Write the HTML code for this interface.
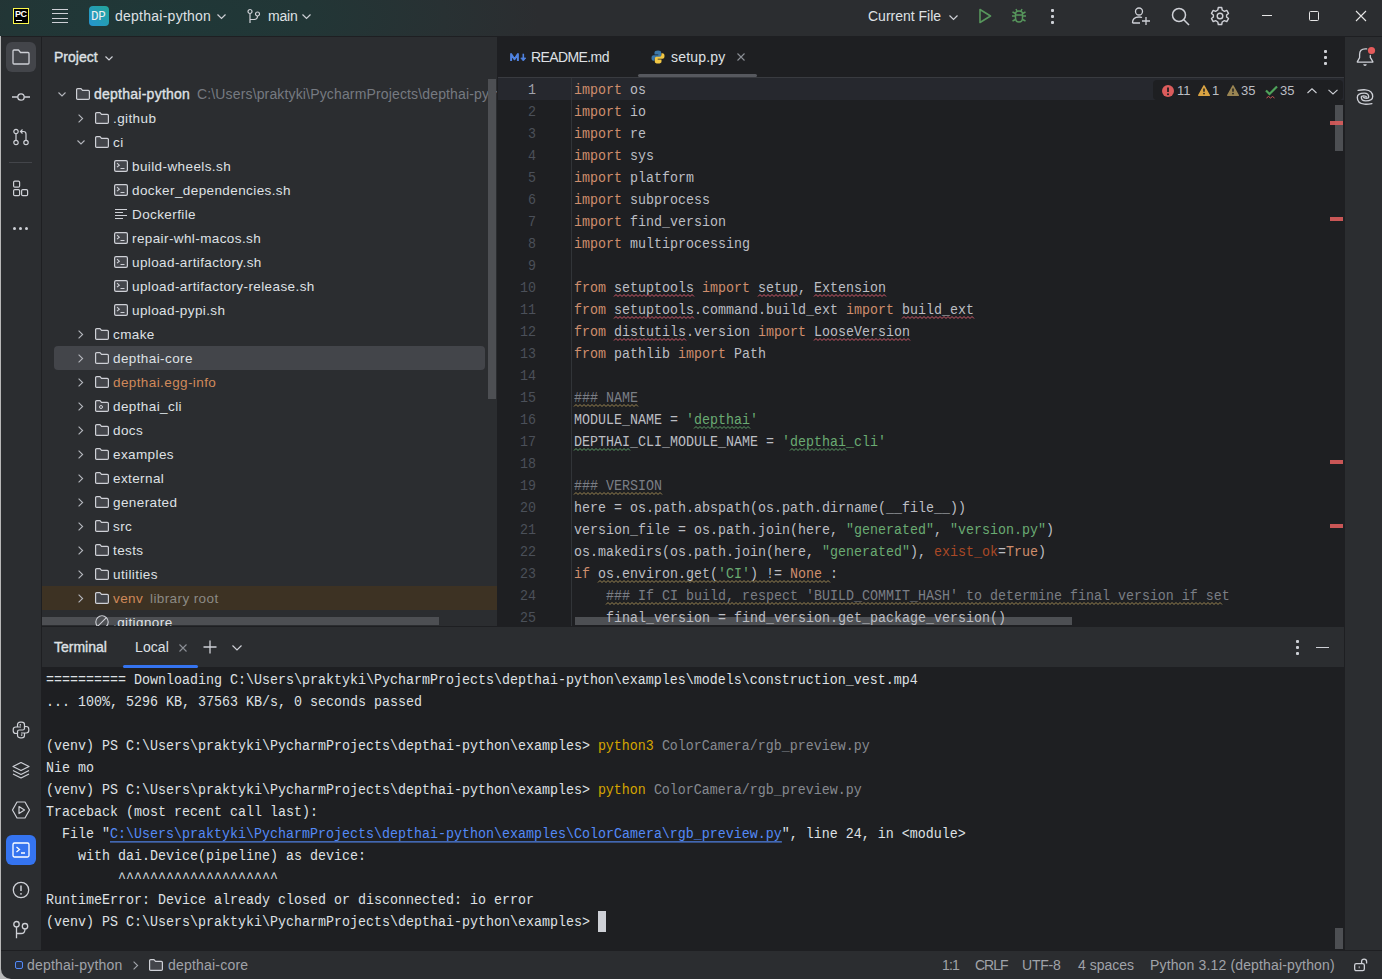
<!DOCTYPE html><html><head><meta charset="utf-8"><style>
*{box-sizing:border-box;margin:0;padding:0}
html,body{width:1382px;height:979px;overflow:hidden;background:#2B2D30}
body{position:relative;font-family:'Liberation Sans',sans-serif;font-size:14px;color:#DFE1E5}
.a{position:absolute}
.t{position:absolute;white-space:pre;line-height:16px}
.mono{font-family:'Liberation Mono',monospace;font-size:13.333px;white-space:pre;transform:scaleY(1.13);transform-origin:0 16.5px}
.sb{-webkit-text-stroke:0.35px currentColor}
svg{position:absolute;overflow:visible}
.kw{color:#CF8E6D}.str{color:#6AAB73}.cm{color:#7A7E85}.par{color:#AA4926}
.wr{text-decoration:underline wavy #F75464;text-decoration-thickness:1px;text-underline-offset:3px;text-decoration-skip-ink:none}
.wg{text-decoration:underline wavy #5E9B66;text-decoration-thickness:1px;text-underline-offset:3px;text-decoration-skip-ink:none}
.wy{text-decoration:underline wavy #8C7A4A;text-decoration-thickness:1px;text-underline-offset:3px;text-decoration-skip-ink:none}
</style></head><body><div class="a" style="left:0;top:0;width:1382px;height:36px;background:radial-gradient(ellipse 380px 110px at 160px 18px,#1F3838 0%,#223636 40%,#283133 75%,#2B2D30 100%)"></div><div class="a" style="left:0;top:36px;width:1382px;height:1px;background:#1E1F22"></div><div class="a" style="left:13px;top:8px;width:16px;height:16px;background:#000;border:1px solid #FCF84A"></div><div class="t" style="left:15px;top:8px;font-size:9px;font-weight:700;color:#fff;line-height:12px;letter-spacing:-0.5px">PC</div><div class="a" style="left:16px;top:20px;width:6px;height:1px;background:#fff"></div><div class="a" style="left:52px;top:8.5px;width:16px;height:1.4px;background:#CED0D6"></div><div class="a" style="left:52px;top:13.1px;width:16px;height:1.4px;background:#CED0D6"></div><div class="a" style="left:52px;top:17.5px;width:16px;height:1.4px;background:#CED0D6"></div><div class="a" style="left:52px;top:21.9px;width:16px;height:1.4px;background:#CED0D6"></div><div class="a" style="left:89px;top:6px;width:20px;height:20px;border-radius:4px;background:linear-gradient(45deg,#2594D2,#24A69A)"></div><div class="t" style="left:91px;top:9px;font-family:'Liberation Mono',monospace;font-size:12.5px;color:#F0F0F0;letter-spacing:-0.3px">DP</div><div class="t" style="left:115px;top:8px;color:#DFE1E5;letter-spacing:0.25px">depthai-python</div><svg style="left:217px;top:14px" width="9" height="4.5"><path d="M0.5 0.5 L4.5 4.5 L8.5 0.5" fill="none" stroke="#CED0D6" stroke-width="1.2"/></svg><svg style="left:247px;top:9px" width="14" height="15"><circle cx="3" cy="2.5" r="2" fill="none" stroke="#CED0D6" stroke-width="1.2"/><circle cx="10.5" cy="5" r="2" fill="none" stroke="#CED0D6" stroke-width="1.2"/><path d="M3 4.5 V14 M3 10.5 H7 Q10.5 10.5 10.5 7" fill="none" stroke="#CED0D6" stroke-width="1.2"/></svg><div class="t" style="left:268px;top:8px;color:#DFE1E5;letter-spacing:-0.2px">main</div><svg style="left:302px;top:14px" width="9" height="4.5"><path d="M0.5 0.5 L4.5 4.5 L8.5 0.5" fill="none" stroke="#CED0D6" stroke-width="1.2"/></svg><div class="t" style="left:868px;top:8px;color:#DFE1E5">Current File</div><svg style="left:949px;top:15px" width="9" height="4.5"><path d="M0.5 0.5 L4.5 4.5 L8.5 0.5" fill="none" stroke="#CED0D6" stroke-width="1.2"/></svg><svg style="left:977px;top:8px" width="16" height="16"><path d="M3 1.5 L13.5 8 L3 14.5 Z" fill="none" stroke="#57965C" stroke-width="1.6" stroke-linejoin="round"/></svg><svg style="left:1011px;top:8px" width="16" height="16"><path d="M4.5 6 Q4.5 3 8 3 Q11.5 3 11.5 6 V10 Q11.5 14 8 14 Q4.5 14 4.5 10 Z" fill="none" stroke="#57965C" stroke-width="1.5"/><path d="M6 3 L5 1 M10 3 L11 1 M1 8 H4.5 M11.5 8 H15 M1.5 13 L4.5 11.5 M14.5 13 L11.5 11.5 M1.5 4 L4.5 5.5 M14.5 4 L11.5 5.5 M4.5 7 H11.5" fill="none" stroke="#57965C" stroke-width="1.5"/></svg><div class="a" style="left:1051px;top:9px;width:2.5px;height:2.5px;background:#CED0D6;border-radius:1px"></div><div class="a" style="left:1051px;top:15px;width:2.5px;height:2.5px;background:#CED0D6;border-radius:1px"></div><div class="a" style="left:1051px;top:21px;width:2.5px;height:2.5px;background:#CED0D6;border-radius:1px"></div><svg style="left:1131px;top:6px" width="20" height="20"><circle cx="8" cy="5.5" r="3.5" fill="none" stroke="#CED0D6" stroke-width="1.3"/><path d="M1.5 17 Q1.5 11 8 11 Q10 11 11 11.5" fill="none" stroke="#CED0D6" stroke-width="1.3"/><path d="M1.5 17 H9 M15 11 V19 M11 15 H19" fill="none" stroke="#CED0D6" stroke-width="1.3"/></svg><svg style="left:1171px;top:7px" width="19" height="19"><circle cx="8" cy="8" r="6.5" fill="none" stroke="#CED0D6" stroke-width="1.5"/><path d="M12.8 12.8 L18 18" stroke="#CED0D6" stroke-width="1.6"/></svg><svg style="left:1210px;top:6px" width="20" height="20" viewBox="0 0 20 20"><path d="M8.3 1.5 H11.7 L12.2 4 L14.4 5.3 L16.8 4.4 L18.5 7.4 L16.6 9.1 V10.9 L18.5 12.6 L16.8 15.6 L14.4 14.7 L12.2 16 L11.7 18.5 H8.3 L7.8 16 L5.6 14.7 L3.2 15.6 L1.5 12.6 L3.4 10.9 V9.1 L1.5 7.4 L3.2 4.4 L5.6 5.3 L7.8 4 Z" fill="none" stroke="#CED0D6" stroke-width="1.4" stroke-linejoin="round"/><circle cx="10" cy="10" r="2.8" fill="none" stroke="#CED0D6" stroke-width="1.4"/></svg><div class="a" style="left:1262px;top:15px;width:10px;height:1px;background:#E6E6E6"></div><div class="a" style="left:1309px;top:11px;width:10px;height:10px;border:1px solid #E6E6E6;border-radius:1.5px"></div><svg style="left:1356px;top:11px" width="10" height="10"><path d="M0 0 L10 10 M10 0 L0 10" stroke="#E6E6E6" stroke-width="1.1"/></svg><div class="a" style="left:0;top:37px;width:41px;height:913px;background:#2B2D30"></div><div class="a" style="left:41px;top:37px;width:1px;height:913px;background:#1E1F22"></div><div class="a" style="left:0;top:36px;width:1px;height:915px;background:#B8B8B8"></div><div class="a" style="left:6px;top:42px;width:30px;height:30px;border-radius:6px;background:#43454A"></div><svg style="left:12px;top:49px" width="18" height="16"><path d="M1 2 Q1 1 2 1 H6.5 L8.5 3.5 H16 Q17 3.5 17 4.5 V14 Q17 15 16 15 H2 Q1 15 1 14 Z" fill="none" stroke="#CED0D6" stroke-width="1.3" stroke-linejoin="round"/></svg><svg style="left:11px;top:90px" width="20" height="14"><circle cx="10" cy="7" r="3.2" fill="none" stroke="#CED0D6" stroke-width="1.3"/><path d="M1 7 H6.8 M13.2 7 H19" stroke="#CED0D6" stroke-width="1.3"/></svg><svg style="left:12px;top:128px" width="18" height="18"><circle cx="4" cy="3.5" r="2.2" fill="none" stroke="#CED0D6" stroke-width="1.2"/><circle cx="4" cy="14.5" r="2.2" fill="none" stroke="#CED0D6" stroke-width="1.2"/><circle cx="14" cy="14.5" r="2.2" fill="none" stroke="#CED0D6" stroke-width="1.2"/><path d="M4 5.7 V12.3 M14 12.3 V6 Q14 3.5 11.5 3.5 H9 M10.5 1.5 L8.5 3.5 L10.5 5.5" fill="none" stroke="#CED0D6" stroke-width="1.2"/></svg><div class="a" style="left:9px;top:162px;width:23px;height:1px;background:#43454A"></div><svg style="left:12px;top:180px" width="18" height="18"><rect x="1.6" y="1.1" width="6" height="6" rx="1.2" fill="none" stroke="#CED0D6" stroke-width="1.2"/><rect x="1.6" y="9.6" width="6" height="6" rx="1.2" fill="none" stroke="#CED0D6" stroke-width="1.2"/><rect x="9.6" y="9.6" width="6" height="6" rx="1.2" fill="none" stroke="#CED0D6" stroke-width="1.2"/></svg><div class="a" style="left:13px;top:227px;width:3px;height:3px;border-radius:1.5px;background:#CED0D6"></div><div class="a" style="left:19px;top:227px;width:3px;height:3px;border-radius:1.5px;background:#CED0D6"></div><div class="a" style="left:25px;top:227px;width:3px;height:3px;border-radius:1.5px;background:#CED0D6"></div><svg style="left:12px;top:721px" width="18" height="18"><path d="M5.5 6 V3.8 Q5.5 1.2 8.2 1.2 H9.8 Q12.5 1.2 12.5 3.8 V7.2 Q12.5 9 10.7 9 H7.3 Q5.5 9 5.5 10.8 V12.5 H3.8 Q1.2 12.5 1.2 9.8 V8.7 Q1.2 6 3.8 6 H9" fill="none" stroke="#CED0D6" stroke-width="1.2" stroke-linejoin="round"/><path d="M12.5 12 V14.2 Q12.5 16.8 9.8 16.8 H8.2 Q5.5 16.8 5.5 14.2 V10.8 M12.5 7.2 V5.5 H14.2 Q16.8 5.5 16.8 8.2 V9.3 Q16.8 12 14.2 12 H9" fill="none" stroke="#CED0D6" stroke-width="1.2" stroke-linejoin="round"/><circle cx="8.3" cy="3.9" r="0.8" fill="#CED0D6"/><circle cx="9.7" cy="14.1" r="0.8" fill="#CED0D6"/></svg><svg style="left:11px;top:761px" width="20" height="18"><path d="M10 1.5 L18 5.5 L10 9.5 L2 5.5 Z" fill="none" stroke="#CED0D6" stroke-width="1.2" stroke-linejoin="round"/><path d="M2 9.5 L10 13.5 L18 9.5 M2 13 L10 17 L18 13" fill="none" stroke="#CED0D6" stroke-width="1.2" stroke-linejoin="round"/></svg><svg style="left:11px;top:800px" width="20" height="20"><path d="M6 2 H14 L18.5 10 L14 18 H6 L1.5 10 Z" fill="none" stroke="#CED0D6" stroke-width="1.2" stroke-linejoin="round"/><path d="M8 6.5 L13.5 10 L8 13.5 Z" fill="none" stroke="#CED0D6" stroke-width="1.2" stroke-linejoin="round"/></svg><div class="a" style="left:6px;top:835px;width:30px;height:30px;border-radius:6px;background:#3574F0"></div><svg style="left:12px;top:841px" width="18" height="18"><rect x="1" y="2" width="16" height="14" rx="1.5" fill="none" stroke="#fff" stroke-width="1.3"/><path d="M4.5 6 L7.5 8.5 L4.5 11 M9 12 H13" fill="none" stroke="#fff" stroke-width="1.3"/></svg><svg style="left:12px;top:881px" width="18" height="18"><circle cx="9" cy="9" r="7.7" fill="none" stroke="#CED0D6" stroke-width="1.3"/><path d="M9 4.5 V10" stroke="#CED0D6" stroke-width="1.5"/><circle cx="9" cy="12.8" r="0.9" fill="#CED0D6"/></svg><svg style="left:12px;top:920px" width="18" height="20"><circle cx="4.5" cy="4.2" r="2.7" fill="none" stroke="#CED0D6" stroke-width="1.3"/><circle cx="13" cy="6.2" r="2.7" fill="none" stroke="#CED0D6" stroke-width="1.3"/><path d="M4.5 6.9 V18.3 M4.5 13.5 H9 Q13 13.5 13 8.9" fill="none" stroke="#CED0D6" stroke-width="1.3"/></svg><div class="t sb" style="left:54px;top:49px;color:#DFE1E5">Project</div><svg style="left:105px;top:56px" width="8" height="4.0"><path d="M0.5 0.5 L4.0 4.0 L7.5 0.5" fill="none" stroke="#CED0D6" stroke-width="1.2"/></svg><svg style="left:58px;top:92px" width="8" height="4.0"><path d="M0.5 0.5 L4.0 4.0 L7.5 0.5" fill="none" stroke="#B4B6BC" stroke-width="1.1"/></svg><svg style="left:76px;top:88px" width="14" height="12"><path d="M0.6 1.7 Q0.6 0.6 1.7 0.6 H5 L6.5 2.4 H12.3 Q13.4 2.4 13.4 3.5 V10.3 Q13.4 11.4 12.3 11.4 H1.7 Q0.6 11.4 0.6 10.3 Z" fill="#43454A" stroke="#CED0D6" stroke-width="1.2" stroke-linejoin="round"/></svg><div class="t sb" style="left:94px;top:86px;color:#DFE1E5;letter-spacing:0.25px">depthai-python</div><div class="a" style="left:197px;top:86px;width:300px;height:18px;overflow:hidden"><div class="t" style="left:0;top:0;color:#767A81;letter-spacing:0.15px">C:\Users\praktyki\PycharmProjects\depthai-python</div></div><div class="a" style="left:488px;top:79px;width:8px;height:320px;background:#4D4F53"></div><div class="a" style="left:42px;top:617px;width:397px;height:8px;background:#4D4F53"></div><div class="a" style="left:54px;top:346px;width:431px;height:24px;border-radius:4px;background:#43454A"></div><div class="a" style="left:42px;top:586px;width:455px;height:24px;background:#3D3223"></div><svg style="left:78px;top:114px" width="6" height="9"><path d="M0.6 0.6 L4.6 4.5 L0.6 8.4" fill="none" stroke="#B4B6BC" stroke-width="1.1"/></svg><svg style="left:95px;top:112px" width="14" height="12"><path d="M0.6 1.7 Q0.6 0.6 1.7 0.6 H5 L6.5 2.4 H12.3 Q13.4 2.4 13.4 3.5 V10.3 Q13.4 11.4 12.3 11.4 H1.7 Q0.6 11.4 0.6 10.3 Z" fill="#43454A" stroke="#CED0D6" stroke-width="1.2" stroke-linejoin="round"/></svg><div class="t" style="left:113px;top:111px;color:#DFE1E5;font-size:13.5px;letter-spacing:0.4px">.github</div><svg style="left:77px;top:140px" width="8" height="4.0"><path d="M0.5 0.5 L4.0 4.0 L7.5 0.5" fill="none" stroke="#B4B6BC" stroke-width="1.1"/></svg><svg style="left:95px;top:136px" width="14" height="12"><path d="M0.6 1.7 Q0.6 0.6 1.7 0.6 H5 L6.5 2.4 H12.3 Q13.4 2.4 13.4 3.5 V10.3 Q13.4 11.4 12.3 11.4 H1.7 Q0.6 11.4 0.6 10.3 Z" fill="#43454A" stroke="#CED0D6" stroke-width="1.2" stroke-linejoin="round"/></svg><div class="t" style="left:113px;top:135px;color:#DFE1E5;font-size:13.5px;letter-spacing:0.4px">ci</div><svg style="left:114px;top:160px" width="14" height="12"><rect x="0.6" y="0.6" width="12.8" height="10.8" rx="1.4" fill="#43454A" stroke="#CED0D6" stroke-width="1.2"/><path d="M3 3.2 L5.3 5.2 L3 7.2 M6.5 8.5 H10.5" fill="none" stroke="#CED0D6" stroke-width="1.1"/></svg><div class="t" style="left:132px;top:159px;color:#DFE1E5;font-size:13.5px;letter-spacing:0.4px">build-wheels.sh</div><svg style="left:114px;top:184px" width="14" height="12"><rect x="0.6" y="0.6" width="12.8" height="10.8" rx="1.4" fill="#43454A" stroke="#CED0D6" stroke-width="1.2"/><path d="M3 3.2 L5.3 5.2 L3 7.2 M6.5 8.5 H10.5" fill="none" stroke="#CED0D6" stroke-width="1.1"/></svg><div class="t" style="left:132px;top:183px;color:#DFE1E5;font-size:13.5px;letter-spacing:0.4px">docker_dependencies.sh</div><svg style="left:114px;top:208px" width="14" height="12"><rect x="1" y="1" width="12" height="1" fill="#CED0D6"/><rect x="1" y="4" width="8" height="1" fill="#CED0D6"/><rect x="1" y="7" width="12" height="1" fill="#CED0D6"/><rect x="1" y="10" width="8" height="1" fill="#CED0D6"/></svg><div class="t" style="left:132px;top:207px;color:#DFE1E5;font-size:13.5px;letter-spacing:0.4px">Dockerfile</div><svg style="left:114px;top:232px" width="14" height="12"><rect x="0.6" y="0.6" width="12.8" height="10.8" rx="1.4" fill="#43454A" stroke="#CED0D6" stroke-width="1.2"/><path d="M3 3.2 L5.3 5.2 L3 7.2 M6.5 8.5 H10.5" fill="none" stroke="#CED0D6" stroke-width="1.1"/></svg><div class="t" style="left:132px;top:231px;color:#DFE1E5;font-size:13.5px;letter-spacing:0.4px">repair-whl-macos.sh</div><svg style="left:114px;top:256px" width="14" height="12"><rect x="0.6" y="0.6" width="12.8" height="10.8" rx="1.4" fill="#43454A" stroke="#CED0D6" stroke-width="1.2"/><path d="M3 3.2 L5.3 5.2 L3 7.2 M6.5 8.5 H10.5" fill="none" stroke="#CED0D6" stroke-width="1.1"/></svg><div class="t" style="left:132px;top:255px;color:#DFE1E5;font-size:13.5px;letter-spacing:0.4px">upload-artifactory.sh</div><svg style="left:114px;top:280px" width="14" height="12"><rect x="0.6" y="0.6" width="12.8" height="10.8" rx="1.4" fill="#43454A" stroke="#CED0D6" stroke-width="1.2"/><path d="M3 3.2 L5.3 5.2 L3 7.2 M6.5 8.5 H10.5" fill="none" stroke="#CED0D6" stroke-width="1.1"/></svg><div class="t" style="left:132px;top:279px;color:#DFE1E5;font-size:13.5px;letter-spacing:0.4px">upload-artifactory-release.sh</div><svg style="left:114px;top:304px" width="14" height="12"><rect x="0.6" y="0.6" width="12.8" height="10.8" rx="1.4" fill="#43454A" stroke="#CED0D6" stroke-width="1.2"/><path d="M3 3.2 L5.3 5.2 L3 7.2 M6.5 8.5 H10.5" fill="none" stroke="#CED0D6" stroke-width="1.1"/></svg><div class="t" style="left:132px;top:303px;color:#DFE1E5;font-size:13.5px;letter-spacing:0.4px">upload-pypi.sh</div><svg style="left:78px;top:330px" width="6" height="9"><path d="M0.6 0.6 L4.6 4.5 L0.6 8.4" fill="none" stroke="#B4B6BC" stroke-width="1.1"/></svg><svg style="left:95px;top:328px" width="14" height="12"><path d="M0.6 1.7 Q0.6 0.6 1.7 0.6 H5 L6.5 2.4 H12.3 Q13.4 2.4 13.4 3.5 V10.3 Q13.4 11.4 12.3 11.4 H1.7 Q0.6 11.4 0.6 10.3 Z" fill="#43454A" stroke="#CED0D6" stroke-width="1.2" stroke-linejoin="round"/></svg><div class="t" style="left:113px;top:327px;color:#DFE1E5;font-size:13.5px;letter-spacing:0.4px">cmake</div><svg style="left:78px;top:354px" width="6" height="9"><path d="M0.6 0.6 L4.6 4.5 L0.6 8.4" fill="none" stroke="#B4B6BC" stroke-width="1.1"/></svg><svg style="left:95px;top:352px" width="14" height="12"><path d="M0.6 1.7 Q0.6 0.6 1.7 0.6 H5 L6.5 2.4 H12.3 Q13.4 2.4 13.4 3.5 V10.3 Q13.4 11.4 12.3 11.4 H1.7 Q0.6 11.4 0.6 10.3 Z" fill="#43454A" stroke="#CED0D6" stroke-width="1.2" stroke-linejoin="round"/></svg><div class="t" style="left:113px;top:351px;color:#DFE1E5;font-size:13.5px;letter-spacing:0.4px">depthai-core</div><svg style="left:78px;top:378px" width="6" height="9"><path d="M0.6 0.6 L4.6 4.5 L0.6 8.4" fill="none" stroke="#B4B6BC" stroke-width="1.1"/></svg><svg style="left:95px;top:376px" width="14" height="12"><path d="M0.6 1.7 Q0.6 0.6 1.7 0.6 H5 L6.5 2.4 H12.3 Q13.4 2.4 13.4 3.5 V10.3 Q13.4 11.4 12.3 11.4 H1.7 Q0.6 11.4 0.6 10.3 Z" fill="#43454A" stroke="#CED0D6" stroke-width="1.2" stroke-linejoin="round"/></svg><div class="t" style="left:113px;top:375px;color:#D0895A;font-size:13.5px;letter-spacing:0.4px">depthai.egg-info</div><svg style="left:78px;top:402px" width="6" height="9"><path d="M0.6 0.6 L4.6 4.5 L0.6 8.4" fill="none" stroke="#B4B6BC" stroke-width="1.1"/></svg><svg style="left:95px;top:400px" width="14" height="12"><path d="M0.6 1.7 Q0.6 0.6 1.7 0.6 H5 L6.5 2.4 H12.3 Q13.4 2.4 13.4 3.5 V10.3 Q13.4 11.4 12.3 11.4 H1.7 Q0.6 11.4 0.6 10.3 Z" fill="#43454A" stroke="#CED0D6" stroke-width="1.2" stroke-linejoin="round"/></svg><div class="a" style="left:99px;top:405px;width:4px;height:4px;border:1px solid #CED0D6;border-radius:2px"></div><div class="t" style="left:113px;top:399px;color:#DFE1E5;font-size:13.5px;letter-spacing:0.4px">depthai_cli</div><svg style="left:78px;top:426px" width="6" height="9"><path d="M0.6 0.6 L4.6 4.5 L0.6 8.4" fill="none" stroke="#B4B6BC" stroke-width="1.1"/></svg><svg style="left:95px;top:424px" width="14" height="12"><path d="M0.6 1.7 Q0.6 0.6 1.7 0.6 H5 L6.5 2.4 H12.3 Q13.4 2.4 13.4 3.5 V10.3 Q13.4 11.4 12.3 11.4 H1.7 Q0.6 11.4 0.6 10.3 Z" fill="#43454A" stroke="#CED0D6" stroke-width="1.2" stroke-linejoin="round"/></svg><div class="t" style="left:113px;top:423px;color:#DFE1E5;font-size:13.5px;letter-spacing:0.4px">docs</div><svg style="left:78px;top:450px" width="6" height="9"><path d="M0.6 0.6 L4.6 4.5 L0.6 8.4" fill="none" stroke="#B4B6BC" stroke-width="1.1"/></svg><svg style="left:95px;top:448px" width="14" height="12"><path d="M0.6 1.7 Q0.6 0.6 1.7 0.6 H5 L6.5 2.4 H12.3 Q13.4 2.4 13.4 3.5 V10.3 Q13.4 11.4 12.3 11.4 H1.7 Q0.6 11.4 0.6 10.3 Z" fill="#43454A" stroke="#CED0D6" stroke-width="1.2" stroke-linejoin="round"/></svg><div class="t" style="left:113px;top:447px;color:#DFE1E5;font-size:13.5px;letter-spacing:0.4px">examples</div><svg style="left:78px;top:474px" width="6" height="9"><path d="M0.6 0.6 L4.6 4.5 L0.6 8.4" fill="none" stroke="#B4B6BC" stroke-width="1.1"/></svg><svg style="left:95px;top:472px" width="14" height="12"><path d="M0.6 1.7 Q0.6 0.6 1.7 0.6 H5 L6.5 2.4 H12.3 Q13.4 2.4 13.4 3.5 V10.3 Q13.4 11.4 12.3 11.4 H1.7 Q0.6 11.4 0.6 10.3 Z" fill="#43454A" stroke="#CED0D6" stroke-width="1.2" stroke-linejoin="round"/></svg><div class="t" style="left:113px;top:471px;color:#DFE1E5;font-size:13.5px;letter-spacing:0.4px">external</div><svg style="left:78px;top:498px" width="6" height="9"><path d="M0.6 0.6 L4.6 4.5 L0.6 8.4" fill="none" stroke="#B4B6BC" stroke-width="1.1"/></svg><svg style="left:95px;top:496px" width="14" height="12"><path d="M0.6 1.7 Q0.6 0.6 1.7 0.6 H5 L6.5 2.4 H12.3 Q13.4 2.4 13.4 3.5 V10.3 Q13.4 11.4 12.3 11.4 H1.7 Q0.6 11.4 0.6 10.3 Z" fill="#43454A" stroke="#CED0D6" stroke-width="1.2" stroke-linejoin="round"/></svg><div class="t" style="left:113px;top:495px;color:#DFE1E5;font-size:13.5px;letter-spacing:0.4px">generated</div><svg style="left:78px;top:522px" width="6" height="9"><path d="M0.6 0.6 L4.6 4.5 L0.6 8.4" fill="none" stroke="#B4B6BC" stroke-width="1.1"/></svg><svg style="left:95px;top:520px" width="14" height="12"><path d="M0.6 1.7 Q0.6 0.6 1.7 0.6 H5 L6.5 2.4 H12.3 Q13.4 2.4 13.4 3.5 V10.3 Q13.4 11.4 12.3 11.4 H1.7 Q0.6 11.4 0.6 10.3 Z" fill="#43454A" stroke="#CED0D6" stroke-width="1.2" stroke-linejoin="round"/></svg><div class="t" style="left:113px;top:519px;color:#DFE1E5;font-size:13.5px;letter-spacing:0.4px">src</div><svg style="left:78px;top:546px" width="6" height="9"><path d="M0.6 0.6 L4.6 4.5 L0.6 8.4" fill="none" stroke="#B4B6BC" stroke-width="1.1"/></svg><svg style="left:95px;top:544px" width="14" height="12"><path d="M0.6 1.7 Q0.6 0.6 1.7 0.6 H5 L6.5 2.4 H12.3 Q13.4 2.4 13.4 3.5 V10.3 Q13.4 11.4 12.3 11.4 H1.7 Q0.6 11.4 0.6 10.3 Z" fill="#43454A" stroke="#CED0D6" stroke-width="1.2" stroke-linejoin="round"/></svg><div class="t" style="left:113px;top:543px;color:#DFE1E5;font-size:13.5px;letter-spacing:0.4px">tests</div><svg style="left:78px;top:570px" width="6" height="9"><path d="M0.6 0.6 L4.6 4.5 L0.6 8.4" fill="none" stroke="#B4B6BC" stroke-width="1.1"/></svg><svg style="left:95px;top:568px" width="14" height="12"><path d="M0.6 1.7 Q0.6 0.6 1.7 0.6 H5 L6.5 2.4 H12.3 Q13.4 2.4 13.4 3.5 V10.3 Q13.4 11.4 12.3 11.4 H1.7 Q0.6 11.4 0.6 10.3 Z" fill="#43454A" stroke="#CED0D6" stroke-width="1.2" stroke-linejoin="round"/></svg><div class="t" style="left:113px;top:567px;color:#DFE1E5;font-size:13.5px;letter-spacing:0.4px">utilities</div><svg style="left:78px;top:594px" width="6" height="9"><path d="M0.6 0.6 L4.6 4.5 L0.6 8.4" fill="none" stroke="#B4B6BC" stroke-width="1.1"/></svg><svg style="left:95px;top:592px" width="14" height="12"><path d="M0.6 1.7 Q0.6 0.6 1.7 0.6 H5 L6.5 2.4 H12.3 Q13.4 2.4 13.4 3.5 V10.3 Q13.4 11.4 12.3 11.4 H1.7 Q0.6 11.4 0.6 10.3 Z" fill="#43454A" stroke="#CED0D6" stroke-width="1.2" stroke-linejoin="round"/></svg><div class="t" style="left:113px;top:591px;color:#D0895A;font-size:13.5px;letter-spacing:0.4px">venv</div><div class="t" style="left:150px;top:591px;color:#8C8A85;font-size:13.5px;letter-spacing:0.4px">library root</div><svg style="left:95px;top:615px" width="14" height="14"><circle cx="7" cy="7" r="6.2" fill="none" stroke="#CED0D6" stroke-width="1.1"/><path d="M2.6 11.4 L11.4 2.6" stroke="#CED0D6" stroke-width="1.1"/></svg><div class="t" style="left:113px;top:615px;color:#DFE1E5;font-size:13.5px;letter-spacing:0.4px">.gitignore</div><div class="a" style="left:497px;top:37px;width:847px;height:589px;background:#1E1F22"></div><div class="a" style="left:498px;top:77px;width:846px;height:1px;background:#393B40"></div><svg style="left:510px;top:53px" width="17" height="9"><path d="M1.1 8 V1 L4.5 6.2 L7.9 1 V8" fill="none" stroke="#4F82E0" stroke-width="2" stroke-linejoin="round"/><path d="M13.3 0.7 V6" stroke="#4F82E0" stroke-width="1.6"/><path d="M10.8 5 H15.8 L13.3 8 Z" fill="#4F82E0" stroke="#4F82E0" stroke-width="0.8" stroke-linejoin="round"/></svg><div class="t" style="left:531px;top:49px;color:#DFE1E5;letter-spacing:-0.6px">README.md</div><svg style="left:651px;top:50px" width="14" height="14" viewBox="0 0 14 14"><path d="M7 0.5 Q3.5 0.5 3.5 2.5 V4.5 H7.3 V5.2 H2.5 Q0.5 5.2 0.5 8 Q0.5 10.8 2.5 10.8 H3.6 V9 Q3.6 7.2 5.5 7.2 H8.6 Q10.2 7.2 10.2 5.6 V2.5 Q10.2 0.5 7 0.5 Z" fill="#3C78AA"/><path d="M7 13.5 Q10.5 13.5 10.5 11.5 V9.5 H6.7 V8.8 H11.5 Q13.5 8.8 13.5 6 Q13.5 3.2 11.5 3.2 H10.4 V5 Q10.4 6.8 8.5 6.8 H5.4 Q3.8 6.8 3.8 8.4 V11.5 Q3.8 13.5 7 13.5 Z" fill="#F2C744"/></svg><div class="t" style="left:671px;top:49px;color:#DFE1E5;letter-spacing:0.2px">setup.py</div><svg style="left:737px;top:53px" width="8" height="8"><path d="M0.5 0.5 L7.5 7.5 M7.5 0.5 L0.5 7.5" stroke="#8C8F96" stroke-width="1.1"/></svg><div class="a" style="left:638px;top:74px;width:119px;height:3px;border-radius:1.5px;background:#56585E"></div><div class="a" style="left:1324px;top:50px;width:2.5px;height:2.5px;background:#CED0D6;border-radius:1px"></div><div class="a" style="left:1324px;top:56px;width:2.5px;height:2.5px;background:#CED0D6;border-radius:1px"></div><div class="a" style="left:1324px;top:62px;width:2.5px;height:2.5px;background:#CED0D6;border-radius:1px"></div><div class="a" style="left:575px;top:617px;width:497px;height:8px;background:#4D4F53"></div><div class="a" style="left:498px;top:78px;width:846px;height:22px;background:#26282E"></div><div class="a" style="left:571px;top:78px;width:1px;height:548px;background:#313438"></div><div class="a mono" style="left:500px;top:78px;width:36px;text-align:right;line-height:22px;padding-top:2px;color:#A1A3AB">1</div><div class="a mono" style="left:574px;top:78px;line-height:22px;padding-top:2px;color:#BCBEC4"><span class="kw">import</span> os</div><div class="a mono" style="left:500px;top:100px;width:36px;text-align:right;line-height:22px;padding-top:2px;color:#4B5059">2</div><div class="a mono" style="left:574px;top:100px;line-height:22px;padding-top:2px;color:#BCBEC4"><span class="kw">import</span> io</div><div class="a mono" style="left:500px;top:122px;width:36px;text-align:right;line-height:22px;padding-top:2px;color:#4B5059">3</div><div class="a mono" style="left:574px;top:122px;line-height:22px;padding-top:2px;color:#BCBEC4"><span class="kw">import</span> re</div><div class="a mono" style="left:500px;top:144px;width:36px;text-align:right;line-height:22px;padding-top:2px;color:#4B5059">4</div><div class="a mono" style="left:574px;top:144px;line-height:22px;padding-top:2px;color:#BCBEC4"><span class="kw">import</span> sys</div><div class="a mono" style="left:500px;top:166px;width:36px;text-align:right;line-height:22px;padding-top:2px;color:#4B5059">5</div><div class="a mono" style="left:574px;top:166px;line-height:22px;padding-top:2px;color:#BCBEC4"><span class="kw">import</span> platform</div><div class="a mono" style="left:500px;top:188px;width:36px;text-align:right;line-height:22px;padding-top:2px;color:#4B5059">6</div><div class="a mono" style="left:574px;top:188px;line-height:22px;padding-top:2px;color:#BCBEC4"><span class="kw">import</span> subprocess</div><div class="a mono" style="left:500px;top:210px;width:36px;text-align:right;line-height:22px;padding-top:2px;color:#4B5059">7</div><div class="a mono" style="left:574px;top:210px;line-height:22px;padding-top:2px;color:#BCBEC4"><span class="kw">import</span> find_version</div><div class="a mono" style="left:500px;top:232px;width:36px;text-align:right;line-height:22px;padding-top:2px;color:#4B5059">8</div><div class="a mono" style="left:574px;top:232px;line-height:22px;padding-top:2px;color:#BCBEC4"><span class="kw">import</span> multiprocessing</div><div class="a mono" style="left:500px;top:254px;width:36px;text-align:right;line-height:22px;padding-top:2px;color:#4B5059">9</div><div class="a mono" style="left:574px;top:254px;line-height:22px;padding-top:2px;color:#BCBEC4"></div><div class="a mono" style="left:500px;top:276px;width:36px;text-align:right;line-height:22px;padding-top:2px;color:#4B5059">10</div><div class="a mono" style="left:574px;top:276px;line-height:22px;padding-top:2px;color:#BCBEC4"><span class="kw">from</span> setuptools <span class="kw">import</span> setup, Extension</div><div class="a mono" style="left:500px;top:298px;width:36px;text-align:right;line-height:22px;padding-top:2px;color:#4B5059">11</div><div class="a mono" style="left:574px;top:298px;line-height:22px;padding-top:2px;color:#BCBEC4"><span class="kw">from</span> setuptools.command.build_ext <span class="kw">import</span> build_ext</div><div class="a mono" style="left:500px;top:320px;width:36px;text-align:right;line-height:22px;padding-top:2px;color:#4B5059">12</div><div class="a mono" style="left:574px;top:320px;line-height:22px;padding-top:2px;color:#BCBEC4"><span class="kw">from</span> distutils.version <span class="kw">import</span> LooseVersion</div><div class="a mono" style="left:500px;top:342px;width:36px;text-align:right;line-height:22px;padding-top:2px;color:#4B5059">13</div><div class="a mono" style="left:574px;top:342px;line-height:22px;padding-top:2px;color:#BCBEC4"><span class="kw">from</span> pathlib <span class="kw">import</span> Path</div><div class="a mono" style="left:500px;top:364px;width:36px;text-align:right;line-height:22px;padding-top:2px;color:#4B5059">14</div><div class="a mono" style="left:574px;top:364px;line-height:22px;padding-top:2px;color:#BCBEC4"></div><div class="a mono" style="left:500px;top:386px;width:36px;text-align:right;line-height:22px;padding-top:2px;color:#4B5059">15</div><div class="a mono" style="left:574px;top:386px;line-height:22px;padding-top:2px;color:#BCBEC4"><span class="cm">### NAME</span></div><div class="a mono" style="left:500px;top:408px;width:36px;text-align:right;line-height:22px;padding-top:2px;color:#4B5059">16</div><div class="a mono" style="left:574px;top:408px;line-height:22px;padding-top:2px;color:#BCBEC4">MODULE_NAME = <span class="str">'</span><span class="str">depthai</span><span class="str">'</span></div><div class="a mono" style="left:500px;top:430px;width:36px;text-align:right;line-height:22px;padding-top:2px;color:#4B5059">17</div><div class="a mono" style="left:574px;top:430px;line-height:22px;padding-top:2px;color:#BCBEC4">DEPTHAI_CLI_MODULE_NAME = <span class="str">'</span><span class="str">depthai</span><span class="str">_cli'</span></div><div class="a mono" style="left:500px;top:452px;width:36px;text-align:right;line-height:22px;padding-top:2px;color:#4B5059">18</div><div class="a mono" style="left:574px;top:452px;line-height:22px;padding-top:2px;color:#BCBEC4"></div><div class="a mono" style="left:500px;top:474px;width:36px;text-align:right;line-height:22px;padding-top:2px;color:#4B5059">19</div><div class="a mono" style="left:574px;top:474px;line-height:22px;padding-top:2px;color:#BCBEC4"><span class="cm">### VERSION</span></div><div class="a mono" style="left:500px;top:496px;width:36px;text-align:right;line-height:22px;padding-top:2px;color:#4B5059">20</div><div class="a mono" style="left:574px;top:496px;line-height:22px;padding-top:2px;color:#BCBEC4">here = os.path.abspath(os.path.dirname(__file__))</div><div class="a mono" style="left:500px;top:518px;width:36px;text-align:right;line-height:22px;padding-top:2px;color:#4B5059">21</div><div class="a mono" style="left:574px;top:518px;line-height:22px;padding-top:2px;color:#BCBEC4">version_file = os.path.join(here, <span class="str">"generated"</span>, <span class="str">"version.py"</span>)</div><div class="a mono" style="left:500px;top:540px;width:36px;text-align:right;line-height:22px;padding-top:2px;color:#4B5059">22</div><div class="a mono" style="left:574px;top:540px;line-height:22px;padding-top:2px;color:#BCBEC4">os.makedirs(os.path.join(here, <span class="str">"generated"</span>), <span class="par">exist_ok</span>=<span class="kw">True</span>)</div><div class="a mono" style="left:500px;top:562px;width:36px;text-align:right;line-height:22px;padding-top:2px;color:#4B5059">23</div><div class="a mono" style="left:574px;top:562px;line-height:22px;padding-top:2px;color:#BCBEC4"><span class="kw">if</span> os.environ.get(<span class="str">'CI'</span>) != <span class="kw">None</span> :</div><div class="a mono" style="left:500px;top:584px;width:36px;text-align:right;line-height:22px;padding-top:2px;color:#4B5059">24</div><div class="a mono" style="left:574px;top:584px;line-height:22px;padding-top:2px;color:#BCBEC4">    <span class="cm">### If CI build, respect 'BUILD_COMMIT_HASH' to determine final version if set</span></div><div class="a mono" style="left:500px;top:606px;width:36px;text-align:right;line-height:22px;padding-top:2px;color:#4B5059">25</div><div class="a mono" style="left:574px;top:606px;line-height:22px;padding-top:2px;color:#BCBEC4">    final_version = find_version.get_package_version()</div><svg style="left:614px;top:294px" width="80" height="3"><polyline points="0 2.5 2 0.5 4 2.5 6 0.5 8 2.5 10 0.5 12 2.5 14 0.5 16 2.5 18 0.5 20 2.5 22 0.5 24 2.5 26 0.5 28 2.5 30 0.5 32 2.5 34 0.5 36 2.5 38 0.5 40 2.5 42 0.5 44 2.5 46 0.5 48 2.5 50 0.5 52 2.5 54 0.5 56 2.5 58 0.5 60 2.5 62 0.5 64 2.5 66 0.5 68 2.5 70 0.5 72 2.5 74 0.5 76 2.5 78 0.5 80 2.5" fill="none" stroke="#D25A6B" stroke-width="1"/></svg><svg style="left:758px;top:294px" width="40" height="3"><polyline points="0 2.5 2 0.5 4 2.5 6 0.5 8 2.5 10 0.5 12 2.5 14 0.5 16 2.5 18 0.5 20 2.5 22 0.5 24 2.5 26 0.5 28 2.5 30 0.5 32 2.5 34 0.5 36 2.5 38 0.5 40 2.5" fill="none" stroke="#D25A6B" stroke-width="1"/></svg><svg style="left:814px;top:294px" width="72" height="3"><polyline points="0 2.5 2 0.5 4 2.5 6 0.5 8 2.5 10 0.5 12 2.5 14 0.5 16 2.5 18 0.5 20 2.5 22 0.5 24 2.5 26 0.5 28 2.5 30 0.5 32 2.5 34 0.5 36 2.5 38 0.5 40 2.5 42 0.5 44 2.5 46 0.5 48 2.5 50 0.5 52 2.5 54 0.5 56 2.5 58 0.5 60 2.5 62 0.5 64 2.5 66 0.5 68 2.5 70 0.5 72 2.5" fill="none" stroke="#D25A6B" stroke-width="1"/></svg><svg style="left:614px;top:316px" width="80" height="3"><polyline points="0 2.5 2 0.5 4 2.5 6 0.5 8 2.5 10 0.5 12 2.5 14 0.5 16 2.5 18 0.5 20 2.5 22 0.5 24 2.5 26 0.5 28 2.5 30 0.5 32 2.5 34 0.5 36 2.5 38 0.5 40 2.5 42 0.5 44 2.5 46 0.5 48 2.5 50 0.5 52 2.5 54 0.5 56 2.5 58 0.5 60 2.5 62 0.5 64 2.5 66 0.5 68 2.5 70 0.5 72 2.5 74 0.5 76 2.5 78 0.5 80 2.5" fill="none" stroke="#D25A6B" stroke-width="1"/></svg><svg style="left:902px;top:316px" width="72" height="3"><polyline points="0 2.5 2 0.5 4 2.5 6 0.5 8 2.5 10 0.5 12 2.5 14 0.5 16 2.5 18 0.5 20 2.5 22 0.5 24 2.5 26 0.5 28 2.5 30 0.5 32 2.5 34 0.5 36 2.5 38 0.5 40 2.5 42 0.5 44 2.5 46 0.5 48 2.5 50 0.5 52 2.5 54 0.5 56 2.5 58 0.5 60 2.5 62 0.5 64 2.5 66 0.5 68 2.5 70 0.5 72 2.5" fill="none" stroke="#D25A6B" stroke-width="1"/></svg><svg style="left:614px;top:338px" width="72" height="3"><polyline points="0 2.5 2 0.5 4 2.5 6 0.5 8 2.5 10 0.5 12 2.5 14 0.5 16 2.5 18 0.5 20 2.5 22 0.5 24 2.5 26 0.5 28 2.5 30 0.5 32 2.5 34 0.5 36 2.5 38 0.5 40 2.5 42 0.5 44 2.5 46 0.5 48 2.5 50 0.5 52 2.5 54 0.5 56 2.5 58 0.5 60 2.5 62 0.5 64 2.5 66 0.5 68 2.5 70 0.5 72 2.5" fill="none" stroke="#D25A6B" stroke-width="1"/></svg><svg style="left:814px;top:338px" width="96" height="3"><polyline points="0 2.5 2 0.5 4 2.5 6 0.5 8 2.5 10 0.5 12 2.5 14 0.5 16 2.5 18 0.5 20 2.5 22 0.5 24 2.5 26 0.5 28 2.5 30 0.5 32 2.5 34 0.5 36 2.5 38 0.5 40 2.5 42 0.5 44 2.5 46 0.5 48 2.5 50 0.5 52 2.5 54 0.5 56 2.5 58 0.5 60 2.5 62 0.5 64 2.5 66 0.5 68 2.5 70 0.5 72 2.5 74 0.5 76 2.5 78 0.5 80 2.5 82 0.5 84 2.5 86 0.5 88 2.5 90 0.5 92 2.5 94 0.5 96 2.5" fill="none" stroke="#D25A6B" stroke-width="1"/></svg><svg style="left:574px;top:404px" width="64" height="3"><polyline points="0 2.5 2 0.5 4 2.5 6 0.5 8 2.5 10 0.5 12 2.5 14 0.5 16 2.5 18 0.5 20 2.5 22 0.5 24 2.5 26 0.5 28 2.5 30 0.5 32 2.5 34 0.5 36 2.5 38 0.5 40 2.5 42 0.5 44 2.5 46 0.5 48 2.5 50 0.5 52 2.5 54 0.5 56 2.5 58 0.5 60 2.5 62 0.5 64 2.5" fill="none" stroke="#9C8652" stroke-width="1"/></svg><svg style="left:694px;top:426px" width="56" height="3"><polyline points="0 2.5 2 0.5 4 2.5 6 0.5 8 2.5 10 0.5 12 2.5 14 0.5 16 2.5 18 0.5 20 2.5 22 0.5 24 2.5 26 0.5 28 2.5 30 0.5 32 2.5 34 0.5 36 2.5 38 0.5 40 2.5 42 0.5 44 2.5 46 0.5 48 2.5 50 0.5 52 2.5 54 0.5 56 2.5" fill="none" stroke="#5E9F67" stroke-width="1"/></svg><svg style="left:574px;top:448px" width="56" height="3"><polyline points="0 2.5 2 0.5 4 2.5 6 0.5 8 2.5 10 0.5 12 2.5 14 0.5 16 2.5 18 0.5 20 2.5 22 0.5 24 2.5 26 0.5 28 2.5 30 0.5 32 2.5 34 0.5 36 2.5 38 0.5 40 2.5 42 0.5 44 2.5 46 0.5 48 2.5 50 0.5 52 2.5 54 0.5 56 2.5" fill="none" stroke="#5E9F67" stroke-width="1"/></svg><svg style="left:790px;top:448px" width="56" height="3"><polyline points="0 2.5 2 0.5 4 2.5 6 0.5 8 2.5 10 0.5 12 2.5 14 0.5 16 2.5 18 0.5 20 2.5 22 0.5 24 2.5 26 0.5 28 2.5 30 0.5 32 2.5 34 0.5 36 2.5 38 0.5 40 2.5 42 0.5 44 2.5 46 0.5 48 2.5 50 0.5 52 2.5 54 0.5 56 2.5" fill="none" stroke="#5E9F67" stroke-width="1"/></svg><svg style="left:574px;top:492px" width="88" height="3"><polyline points="0 2.5 2 0.5 4 2.5 6 0.5 8 2.5 10 0.5 12 2.5 14 0.5 16 2.5 18 0.5 20 2.5 22 0.5 24 2.5 26 0.5 28 2.5 30 0.5 32 2.5 34 0.5 36 2.5 38 0.5 40 2.5 42 0.5 44 2.5 46 0.5 48 2.5 50 0.5 52 2.5 54 0.5 56 2.5 58 0.5 60 2.5 62 0.5 64 2.5 66 0.5 68 2.5 70 0.5 72 2.5 74 0.5 76 2.5 78 0.5 80 2.5 82 0.5 84 2.5 86 0.5 88 2.5" fill="none" stroke="#9C8652" stroke-width="1"/></svg><svg style="left:598px;top:580px" width="232" height="3"><polyline points="0 2.5 2 0.5 4 2.5 6 0.5 8 2.5 10 0.5 12 2.5 14 0.5 16 2.5 18 0.5 20 2.5 22 0.5 24 2.5 26 0.5 28 2.5 30 0.5 32 2.5 34 0.5 36 2.5 38 0.5 40 2.5 42 0.5 44 2.5 46 0.5 48 2.5 50 0.5 52 2.5 54 0.5 56 2.5 58 0.5 60 2.5 62 0.5 64 2.5 66 0.5 68 2.5 70 0.5 72 2.5 74 0.5 76 2.5 78 0.5 80 2.5 82 0.5 84 2.5 86 0.5 88 2.5 90 0.5 92 2.5 94 0.5 96 2.5 98 0.5 100 2.5 102 0.5 104 2.5 106 0.5 108 2.5 110 0.5 112 2.5 114 0.5 116 2.5 118 0.5 120 2.5 122 0.5 124 2.5 126 0.5 128 2.5 130 0.5 132 2.5 134 0.5 136 2.5 138 0.5 140 2.5 142 0.5 144 2.5 146 0.5 148 2.5 150 0.5 152 2.5 154 0.5 156 2.5 158 0.5 160 2.5 162 0.5 164 2.5 166 0.5 168 2.5 170 0.5 172 2.5 174 0.5 176 2.5 178 0.5 180 2.5 182 0.5 184 2.5 186 0.5 188 2.5 190 0.5 192 2.5 194 0.5 196 2.5 198 0.5 200 2.5 202 0.5 204 2.5 206 0.5 208 2.5 210 0.5 212 2.5 214 0.5 216 2.5 218 0.5 220 2.5 222 0.5 224 2.5 226 0.5 228 2.5 230 0.5 232 2.5" fill="none" stroke="#9C8652" stroke-width="1"/></svg><svg style="left:606px;top:602px" width="616" height="3"><polyline points="0 2.5 2 0.5 4 2.5 6 0.5 8 2.5 10 0.5 12 2.5 14 0.5 16 2.5 18 0.5 20 2.5 22 0.5 24 2.5 26 0.5 28 2.5 30 0.5 32 2.5 34 0.5 36 2.5 38 0.5 40 2.5 42 0.5 44 2.5 46 0.5 48 2.5 50 0.5 52 2.5 54 0.5 56 2.5 58 0.5 60 2.5 62 0.5 64 2.5 66 0.5 68 2.5 70 0.5 72 2.5 74 0.5 76 2.5 78 0.5 80 2.5 82 0.5 84 2.5 86 0.5 88 2.5 90 0.5 92 2.5 94 0.5 96 2.5 98 0.5 100 2.5 102 0.5 104 2.5 106 0.5 108 2.5 110 0.5 112 2.5 114 0.5 116 2.5 118 0.5 120 2.5 122 0.5 124 2.5 126 0.5 128 2.5 130 0.5 132 2.5 134 0.5 136 2.5 138 0.5 140 2.5 142 0.5 144 2.5 146 0.5 148 2.5 150 0.5 152 2.5 154 0.5 156 2.5 158 0.5 160 2.5 162 0.5 164 2.5 166 0.5 168 2.5 170 0.5 172 2.5 174 0.5 176 2.5 178 0.5 180 2.5 182 0.5 184 2.5 186 0.5 188 2.5 190 0.5 192 2.5 194 0.5 196 2.5 198 0.5 200 2.5 202 0.5 204 2.5 206 0.5 208 2.5 210 0.5 212 2.5 214 0.5 216 2.5 218 0.5 220 2.5 222 0.5 224 2.5 226 0.5 228 2.5 230 0.5 232 2.5 234 0.5 236 2.5 238 0.5 240 2.5 242 0.5 244 2.5 246 0.5 248 2.5 250 0.5 252 2.5 254 0.5 256 2.5 258 0.5 260 2.5 262 0.5 264 2.5 266 0.5 268 2.5 270 0.5 272 2.5 274 0.5 276 2.5 278 0.5 280 2.5 282 0.5 284 2.5 286 0.5 288 2.5 290 0.5 292 2.5 294 0.5 296 2.5 298 0.5 300 2.5 302 0.5 304 2.5 306 0.5 308 2.5 310 0.5 312 2.5 314 0.5 316 2.5 318 0.5 320 2.5 322 0.5 324 2.5 326 0.5 328 2.5 330 0.5 332 2.5 334 0.5 336 2.5 338 0.5 340 2.5 342 0.5 344 2.5 346 0.5 348 2.5 350 0.5 352 2.5 354 0.5 356 2.5 358 0.5 360 2.5 362 0.5 364 2.5 366 0.5 368 2.5 370 0.5 372 2.5 374 0.5 376 2.5 378 0.5 380 2.5 382 0.5 384 2.5 386 0.5 388 2.5 390 0.5 392 2.5 394 0.5 396 2.5 398 0.5 400 2.5 402 0.5 404 2.5 406 0.5 408 2.5 410 0.5 412 2.5 414 0.5 416 2.5 418 0.5 420 2.5 422 0.5 424 2.5 426 0.5 428 2.5 430 0.5 432 2.5 434 0.5 436 2.5 438 0.5 440 2.5 442 0.5 444 2.5 446 0.5 448 2.5 450 0.5 452 2.5 454 0.5 456 2.5 458 0.5 460 2.5 462 0.5 464 2.5 466 0.5 468 2.5 470 0.5 472 2.5 474 0.5 476 2.5 478 0.5 480 2.5 482 0.5 484 2.5 486 0.5 488 2.5 490 0.5 492 2.5 494 0.5 496 2.5 498 0.5 500 2.5 502 0.5 504 2.5 506 0.5 508 2.5 510 0.5 512 2.5 514 0.5 516 2.5 518 0.5 520 2.5 522 0.5 524 2.5 526 0.5 528 2.5 530 0.5 532 2.5 534 0.5 536 2.5 538 0.5 540 2.5 542 0.5 544 2.5 546 0.5 548 2.5 550 0.5 552 2.5 554 0.5 556 2.5 558 0.5 560 2.5 562 0.5 564 2.5 566 0.5 568 2.5 570 0.5 572 2.5 574 0.5 576 2.5 578 0.5 580 2.5 582 0.5 584 2.5 586 0.5 588 2.5 590 0.5 592 2.5 594 0.5 596 2.5 598 0.5 600 2.5 602 0.5 604 2.5 606 0.5 608 2.5 610 0.5 612 2.5 614 0.5 616 2.5" fill="none" stroke="#9C8652" stroke-width="1"/></svg><div class="a" style="left:1153px;top:80px;width:190px;height:20px;border-radius:4px;background:#1E1F22"></div><svg style="left:1162px;top:85px" width="12" height="12"><circle cx="6" cy="6" r="6" fill="#DB5C5C"/><path d="M6 2.5 V7" stroke="#1E1F22" stroke-width="1.8"/><circle cx="6" cy="9.2" r="1" fill="#1E1F22"/></svg><div class="t" style="left:1177px;top:83px;color:#BCBEC4;font-size:13px">11</div><svg style="left:1198px;top:85px" width="12" height="11"><path d="M6 0.8 L11.3 10.3 H0.7 Z" fill="#D9A343" stroke="#D9A343" stroke-width="1.4" stroke-linejoin="round"/><path d="M6 3.5 V6.8" stroke="#1E1F22" stroke-width="1.5"/><circle cx="6" cy="8.6" r="0.85" fill="#1E1F22"/></svg><div class="t" style="left:1212px;top:83px;color:#BCBEC4;font-size:13px">1</div><svg style="left:1227px;top:85px" width="12" height="11"><path d="M6 0.8 L11.3 10.3 H0.7 Z" fill="#9A8553" stroke="#9A8553" stroke-width="1.4" stroke-linejoin="round"/><path d="M6 3.5 V6.8" stroke="#1E1F22" stroke-width="1.5"/><circle cx="6" cy="8.6" r="0.85" fill="#1E1F22"/></svg><div class="t" style="left:1241px;top:83px;color:#BCBEC4;font-size:13px">35</div><svg style="left:1265px;top:85px" width="14" height="14"><path d="M1 5.5 L4.5 9 L12 1.5" fill="none" stroke="#4FA35A" stroke-width="2.2"/><path d="M1.5 13 L3.5 11.5 L5.5 13 L7.5 11.5 L9.5 13" fill="none" stroke="#DB5C5C" stroke-width="0.9"/></svg><div class="t" style="left:1280px;top:83px;color:#BCBEC4;font-size:13px">35</div><svg style="left:1307px;top:88px" width="10" height="6"><path d="M0.5 5 L5 0.8 L9.5 5" fill="none" stroke="#CED0D6" stroke-width="1.1"/></svg><svg style="left:1328px;top:89px" width="10" height="6"><path d="M0.5 0.8 L5 5 L9.5 0.8" fill="none" stroke="#CED0D6" stroke-width="1.1"/></svg><div class="a" style="left:1335px;top:105px;width:8px;height:46px;background:#4D4F53"></div><div class="a" style="left:1330px;top:121px;width:13px;height:4px;background:#DB5C5C;opacity:0.9"></div><div class="a" style="left:1330px;top:217px;width:13px;height:4px;background:#DB5C5C;opacity:0.9"></div><div class="a" style="left:1330px;top:460px;width:13px;height:4px;background:#DB5C5C;opacity:0.9"></div><div class="a" style="left:1330px;top:524px;width:13px;height:4px;background:#DB5C5C;opacity:0.9"></div><div class="a" style="left:1344px;top:37px;width:1px;height:913px;background:#1E1F22"></div><div class="a" style="left:1345px;top:37px;width:37px;height:913px;background:#2B2D30"></div><svg style="left:1356px;top:46px" width="22" height="22"><path d="M10.7 2.9 H9.3 Q3.6 2.9 3.6 8.6 V11.6 L1.4 15.6 Q1.1 16.2 1.8 16.2 H16.4 Q17.1 16.2 16.8 15.6 L14.3 11.4 V9.4" fill="none" stroke="#CED0D6" stroke-width="1.3" stroke-linejoin="round" stroke-linecap="round"/><path d="M7.2 18.2 H10.8 Q10.6 20 9 20 Q7.4 20 7.2 18.2 Z" fill="#CED0D6"/><circle cx="15.5" cy="4.5" r="3.6" fill="#E55B5B"/></svg><svg style="left:1356px;top:88px" width="18" height="18" viewBox="0 0 18 18"><path d="M2.1 2.4 Q6 1.6 9.5 1.8 Q16.7 2.5 16.7 8.5 Q16.7 12.9 9.7 12.9 Q5.3 12.9 5.3 9 Q5.3 7.8 7.5 7.8 Q10.2 7.8 10.7 9" fill="none" stroke="#CED0D6" stroke-width="1.35" stroke-linecap="round"/><path d="M15.9 15.6 Q12 16.4 8.5 16.2 Q1.3 15.5 1.3 9.5 Q1.3 5.1 8.3 5.1 Q12.7 5.1 12.7 9 Q12.7 10.2 10.5 10.2 Q7.8 10.2 7.3 9" fill="none" stroke="#CED0D6" stroke-width="1.35" stroke-linecap="round"/></svg><div class="a" style="left:42px;top:626px;width:1302px;height:1px;background:#1E1F22"></div><div class="a" style="left:42px;top:627px;width:1302px;height:40px;background:#2B2D30"></div><div class="a" style="left:42px;top:667px;width:1302px;height:283px;background:#1E1F22"></div><div class="t sb" style="left:54px;top:639px;color:#DFE1E5">Terminal</div><div class="t" style="left:135px;top:639px;color:#DFE1E5;letter-spacing:0.1px">Local</div><svg style="left:179px;top:644px" width="8" height="8"><path d="M0.5 0.5 L7.5 7.5 M7.5 0.5 L0.5 7.5" stroke="#8C8F96" stroke-width="1.1"/></svg><svg style="left:203px;top:640px" width="14" height="14"><path d="M7 0.5 V13.5 M0.5 7 H13.5" stroke="#CED0D6" stroke-width="1.3"/></svg><svg style="left:232px;top:645px" width="10" height="5.0"><path d="M0.5 0.5 L5.0 5.0 L9.5 0.5" fill="none" stroke="#CED0D6" stroke-width="1.2"/></svg><div class="a" style="left:123px;top:665px;width:75px;height:3px;border-radius:1.5px;background:#3574F0"></div><div class="a" style="left:1296px;top:640px;width:2.5px;height:2.5px;background:#CED0D6;border-radius:1px"></div><div class="a" style="left:1296px;top:646px;width:2.5px;height:2.5px;background:#CED0D6;border-radius:1px"></div><div class="a" style="left:1296px;top:652px;width:2.5px;height:2.5px;background:#CED0D6;border-radius:1px"></div><div class="a" style="left:1316px;top:647px;width:13px;height:1.3px;background:#CED0D6"></div><div class="a mono" style="left:46px;top:668px;line-height:22px;padding-top:2px;color:#DFE1E5">========== Downloading C:\Users\praktyki\PycharmProjects\depthai-python\examples\models\construction_vest.mp4</div><div class="a mono" style="left:46px;top:690px;line-height:22px;padding-top:2px;color:#DFE1E5">... 100%, 5296 KB, 37563 KB/s, 0 seconds passed</div><div class="a mono" style="left:46px;top:712px;line-height:22px;padding-top:2px;color:#DFE1E5"></div><div class="a mono" style="left:46px;top:734px;line-height:22px;padding-top:2px;color:#DFE1E5">(venv) PS C:\Users\praktyki\PycharmProjects\depthai-python\examples&gt; <span style="color:#D5A500">python3</span> <span style="color:#868A91">ColorCamera/rgb_preview.py</span></div><div class="a mono" style="left:46px;top:756px;line-height:22px;padding-top:2px;color:#DFE1E5">Nie mo</div><div class="a mono" style="left:46px;top:778px;line-height:22px;padding-top:2px;color:#DFE1E5">(venv) PS C:\Users\praktyki\PycharmProjects\depthai-python\examples&gt; <span style="color:#D5A500">python</span> <span style="color:#868A91">ColorCamera/rgb_preview.py</span></div><div class="a mono" style="left:46px;top:800px;line-height:22px;padding-top:2px;color:#DFE1E5">Traceback (most recent call last):</div><div class="a mono" style="left:46px;top:822px;line-height:22px;padding-top:2px;color:#DFE1E5">  File "<span style="color:#548AF7;text-decoration:underline;text-underline-offset:2.5px;text-decoration-thickness:1px;text-decoration-skip-ink:none">C:\Users\praktyki\PycharmProjects\depthai-python\examples\ColorCamera\rgb_preview.py</span>", line 24, in &lt;module&gt;</div><div class="a mono" style="left:46px;top:844px;line-height:22px;padding-top:2px;color:#DFE1E5">    with dai.Device(pipeline) as device:</div><div class="a mono" style="left:46px;top:866px;line-height:22px;padding-top:2px;color:#DFE1E5">         ^^^^^^^^^^^^^^^^^^^^</div><div class="a mono" style="left:46px;top:888px;line-height:22px;padding-top:2px;color:#DFE1E5">RuntimeError: Device already closed or disconnected: io error</div><div class="a mono" style="left:46px;top:910px;line-height:22px;padding-top:2px;color:#DFE1E5">(venv) PS C:\Users\praktyki\PycharmProjects\depthai-python\examples&gt; </div><div class="a" style="left:598px;top:911px;width:8px;height:21px;background:#CED0D6"></div><div class="a" style="left:1335px;top:928px;width:8px;height:21px;background:#4D4F53"></div><div class="a" style="left:1px;top:950px;width:1381px;height:1px;background:#1E1F22"></div><div class="a" style="left:1px;top:951px;width:1381px;height:28px;background:#2B2D30"></div><div class="a" style="left:0;top:36px;width:1px;height:943px;background:#B8B8B8"></div><div class="a" style="left:1px;top:967px;width:12px;height:12px;background:#B8B8B8"></div><div class="a" style="left:1px;top:951px;width:28px;height:28px;border-bottom-left-radius:10px;background:#2B2D30"></div><div class="a" style="left:15px;top:961px;width:8px;height:8px;border:1.3px solid #548AF7;border-radius:2px;background:#25324D"></div><div class="t" style="left:27px;top:957px;color:#A0A3A9;letter-spacing:0.2px">depthai-python</div><svg style="left:133px;top:961px" width="6" height="9"><path d="M0.6 0.6 L4.6 4.5 L0.6 8.4" fill="none" stroke="#A0A3A9" stroke-width="1.1"/></svg><svg style="left:149px;top:959px" width="14" height="12"><path d="M0.6 1.7 Q0.6 0.6 1.7 0.6 H5 L6.5 2.4 H12.3 Q13.4 2.4 13.4 3.5 V10.3 Q13.4 11.4 12.3 11.4 H1.7 Q0.6 11.4 0.6 10.3 Z" fill="#43454A" stroke="#CED0D6" stroke-width="1.2" stroke-linejoin="round"/></svg><div class="t" style="left:168px;top:957px;color:#A0A3A9;letter-spacing:0.2px">depthai-core</div><div class="t" style="left:942px;top:957px;color:#A0A3A9;letter-spacing:-0.8px">1:1</div><div class="t" style="left:975px;top:957px;color:#A0A3A9;letter-spacing:-1.0px">CRLF</div><div class="t" style="left:1022px;top:957px;color:#A0A3A9;letter-spacing:-0.2px">UTF-8</div><div class="t" style="left:1078px;top:957px;color:#A0A3A9;letter-spacing:0px">4 spaces</div><div class="t" style="left:1150px;top:957px;color:#A0A3A9;letter-spacing:0.15px">Python 3.12 (depthai-python)</div><svg style="left:1354px;top:957.5px" width="14" height="14"><rect x="0.65" y="5.65" width="9.7" height="7" rx="1.6" fill="none" stroke="#CED0D6" stroke-width="1.3"/><path d="M7.6 5.6 V3.6 Q7.6 1.1 10.1 1.1 Q12.6 1.1 12.6 3.6 V5.6" fill="none" stroke="#CED0D6" stroke-width="1.3"/><rect x="4.6" y="8.3" width="1.3" height="2" fill="#9A9CA2"/></svg></body></html>
